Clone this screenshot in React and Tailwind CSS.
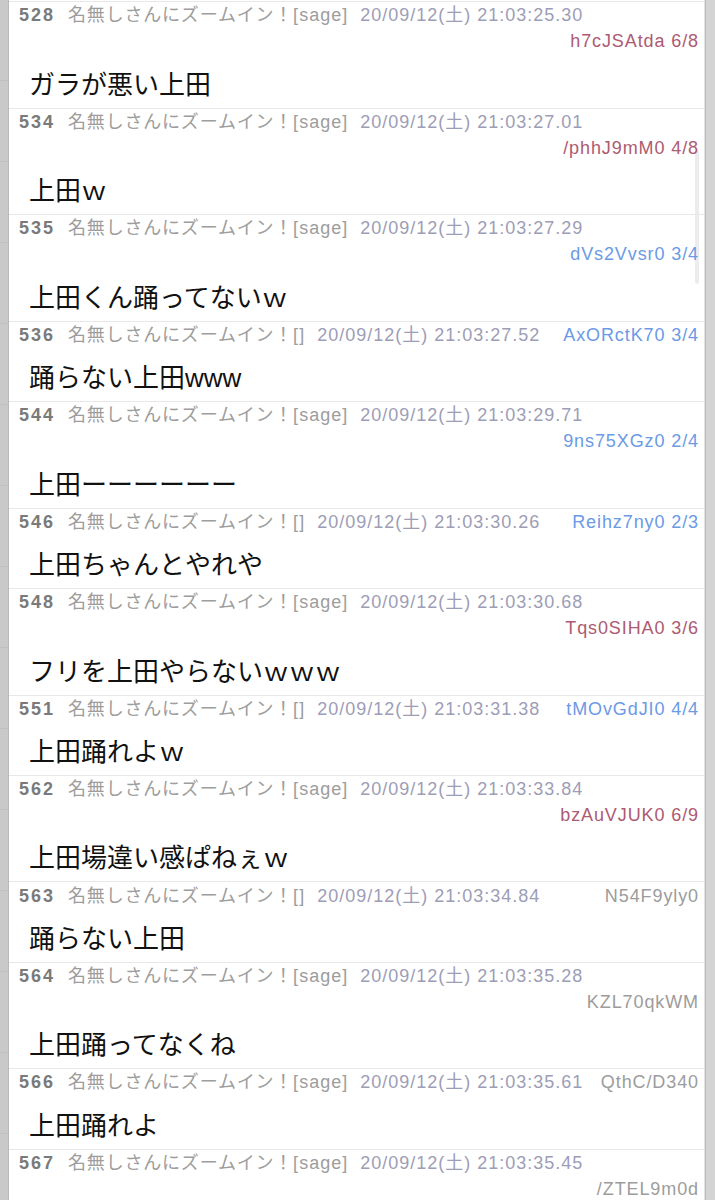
import React from 'react';

const posts = [
  { no: 528, mail: 'sage', date: '20/09/12(土) 21:03:25.30', id: 'h7cJSAtda 6/8', tone: 'red', wrap: true, body: 'ガラが悪い上田' },
  { no: 534, mail: 'sage', date: '20/09/12(土) 21:03:27.01', id: '/phhJ9mM0 4/8', tone: 'red', wrap: true, body: '上田ｗ' },
  { no: 535, mail: 'sage', date: '20/09/12(土) 21:03:27.29', id: 'dVs2Vvsr0 3/4', tone: 'blue', wrap: true, body: '上田くん踊ってないｗ' },
  { no: 536, mail: '', date: '20/09/12(土) 21:03:27.52', id: 'AxORctK70 3/4', tone: 'blue', wrap: false, body: '踊らない上田www' },
  { no: 544, mail: 'sage', date: '20/09/12(土) 21:03:29.71', id: '9ns75XGz0 2/4', tone: 'blue', wrap: true, body: '上田ーーーーーー' },
  { no: 546, mail: '', date: '20/09/12(土) 21:03:30.26', id: 'Reihz7ny0 2/3', tone: 'blue', wrap: false, body: '上田ちゃんとやれや' },
  { no: 548, mail: 'sage', date: '20/09/12(土) 21:03:30.68', id: 'Tqs0SIHA0 3/6', tone: 'red', wrap: true, body: 'フリを上田やらないｗｗｗ' },
  { no: 551, mail: '', date: '20/09/12(土) 21:03:31.38', id: 'tMOvGdJI0 4/4', tone: 'blue', wrap: false, body: '上田踊れよｗ' },
  { no: 562, mail: 'sage', date: '20/09/12(土) 21:03:33.84', id: 'bzAuVJUK0 6/9', tone: 'red', wrap: true, body: '上田場違い感ぱねぇｗ' },
  { no: 563, mail: '', date: '20/09/12(土) 21:03:34.84', id: 'N54F9yly0', tone: 'gray', wrap: false, body: '踊らない上田' },
  { no: 564, mail: 'sage', date: '20/09/12(土) 21:03:35.28', id: 'KZL70qkWM', tone: 'gray', wrap: true, body: '上田踊ってなくね' },
  { no: 566, mail: 'sage', date: '20/09/12(土) 21:03:35.61', id: 'QthC/D340', tone: 'gray', wrap: false, body: '上田踊れよ' },
  { no: 567, mail: 'sage', date: '20/09/12(土) 21:03:35.45', id: '/ZTEL9m0d', tone: 'gray', wrap: true, body: '' },
];

const idColor = {
  red: 'text-[#ad5a72]',
  blue: 'text-[#6b9ae6]',
  gray: 'text-[#9c9c9c]',
};

const Post = ({ post }) => {
  const id = (
    <span className={`whitespace-nowrap tracking-[0.9px] ${idColor[post.tone]}`}>{post.id}</span>
  );

  return (
    <div className="border-t border-[#e8e8e8]">
      <div className="flex h-[26.3px] items-center justify-between pl-[10px] pr-[5px] text-[18px] leading-[26px]">
        <div className="flex items-center whitespace-nowrap">
          <span className="mr-[13px] font-bold tracking-[2px] text-[#7a7a7a]">{post.no}</span>
          <span className="tracking-[0.8px] text-[#9d9d9d]">名無しさんにズームイン！</span>
          <span className="tracking-[1px] text-[#9d9d9d]">[{post.mail}]</span>
          <span className="ml-[12px] tracking-[1px] text-[#9d9db6]">{post.date}</span>
        </div>
        {!post.wrap && id}
      </div>
      {post.wrap && (
        <div className="h-[26.3px] pr-[5px] text-right text-[18px] leading-[26px]">{id}</div>
      )}
      <div className="h-[53px] pl-[20px] pt-[12px] text-[26px] leading-[36px] text-[#111]">
        {post.body}
      </div>
    </div>
  );
};

const App = () => {
  return (
    <div
      className="flex h-[1200px] overflow-hidden bg-[#d2d2d2]"
      style={{ fontFamily: '"Liberation Sans", "Noto Sans CJK JP", sans-serif' }}
    >
      <div className="flex w-[9px] shrink-0 flex-col border-r border-[#b9b9b9] bg-[#c9c9c9]">
        {Array.from({ length: 15 }).map((_, i) => (
          <div key={i} className="h-[81px] shrink-0 border-b border-[#c0c0c0]" />
        ))}
      </div>
      <div className="relative flex-1 overflow-hidden border-r border-[#e2e2e2] bg-white pt-[1px]">
        <div className="absolute right-[5px] top-[150px] h-[134px] w-[4px] rounded-full bg-[#ececec]" />
        <div className="relative">
          {posts.map((post) => (
            <Post key={post.no} post={post} />
          ))}
        </div>
      </div>
      <div className="w-[10px] shrink-0 border-l border-[#bcbcbc] bg-[#d4d4d4]" />
    </div>
  );
};

export default App;
